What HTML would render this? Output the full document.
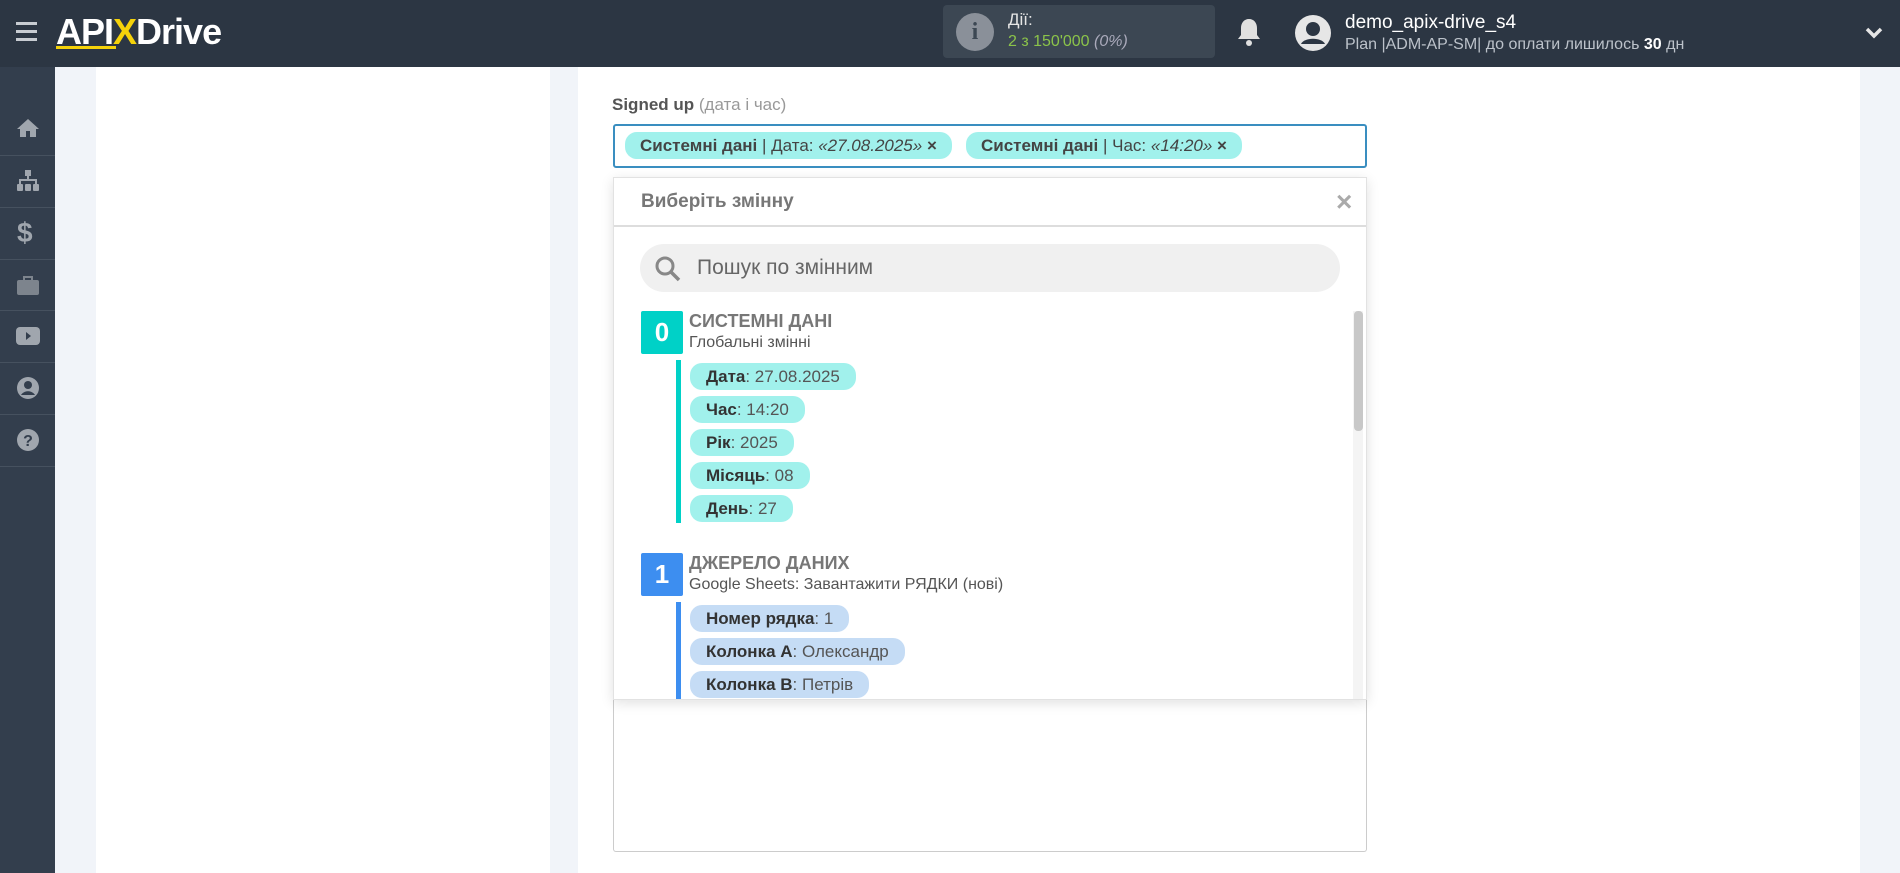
<!DOCTYPE html>
<html><head><meta charset="utf-8"><style>
*{box-sizing:border-box;margin:0;padding:0}
body{width:1900px;height:873px;overflow:hidden;background:#f1f4f9;font-family:"Liberation Sans","Noto Sans CJK SC",sans-serif;position:relative;color:#444}
.hdr{position:absolute;left:0;top:0;width:1900px;height:67px;background:#2c3643}
.side{position:absolute;left:0;top:67px;width:55px;height:806px;background:#333e4d}
.sep{position:absolute;left:0;width:55px;height:1px;background:#46515f}
.ic{position:absolute;left:16px;width:24px;height:24px}
.abs{position:absolute}
.pill{position:absolute;left:690px;height:27px;border-radius:12px;background:#a1f1ec;font-size:17px;line-height:27px;padding:0 16px;color:#555}
.pill b{color:#333}
.pb{background:#c5dcf5}
</style></head><body>
<div class="hdr">
  <div class="abs" style="left:16px;top:22px;width:21px;height:3px;background:#c8ccd2;box-shadow:0 8px 0 #c8ccd2,0 16px 0 #c8ccd2"></div>
  <div class="abs" style="left:56px;top:11px;font-size:36px;font-weight:bold;color:#fff;letter-spacing:-1px">API<span style="color:#f5d20a">X</span>Drive</div>
  <div class="abs" style="left:56px;top:46px;width:60px;height:3px;background:#f5d20a"></div>
  <div class="abs" style="left:943px;top:5px;width:272px;height:53px;background:#3c4753;border-radius:4px"></div>
  <div class="abs" style="left:956px;top:13px;width:38px;height:38px;border-radius:50%;background:#8a9099;color:#3c4753;font-weight:bold;font-size:24px;text-align:center;line-height:38px;font-family:'Liberation Serif',serif">i</div>
  <div class="abs" style="left:1008px;top:10px;font-size:17px;color:#e6e6e6">Дії:</div>
  <div class="abs" style="left:1008px;top:33px;font-size:16px;color:#8bc34a">2 з 150'000 <i style="color:#aab">(0%)</i></div>
  <svg class="abs" style="left:1237px;top:17px" width="24" height="30" viewBox="0 0 24 30"><path d="M12 2c-5 0-8 4-8 9v7l-3 4h22l-3-4v-7c0-5-3-9-8-9z" fill="#e0e0e0"/><circle cx="12" cy="26" r="3" fill="#e0e0e0"/></svg>
  <svg class="abs" style="left:1294px;top:14px" width="38" height="38" viewBox="0 0 38 38"><circle cx="19" cy="19" r="18" fill="#e6e6e6"/><circle cx="19" cy="15" r="7" fill="#2c3643"/><path d="M7 30c3-7 21-7 24 0" fill="#2c3643"/></svg>
  <div class="abs" style="left:1345px;top:12px;font-size:19px;color:#fff">demo_apix-drive_s4</div>
  <div class="abs" style="left:1345px;top:36px;font-size:16px;color:#bcc2ca">Plan |ADM-AP-SM| до оплати лишилось <b style="color:#fff">30</b> дн</div>
  <svg class="abs" style="left:1865px;top:26px" width="18" height="14" viewBox="0 0 18 14"><path d="M2 3l7 7 7-7" stroke="#e6e6e6" stroke-width="3.5" fill="none"/></svg>
</div>
<div class="side">
  <div class="sep" style="top:88px"></div><div class="sep" style="top:140px"></div><div class="sep" style="top:192px"></div><div class="sep" style="top:243px"></div><div class="sep" style="top:295px"></div><div class="sep" style="top:347px"></div><div class="sep" style="top:399px"></div>
  <svg class="ic" style="top:49px" viewBox="0 0 24 24"><path d="M12 3L1 13h3v8h6v-6h4v6h6v-8h3z" fill="#a0a6ae"/></svg>
  <svg class="ic" style="top:102px" viewBox="0 0 24 24"><rect x="9" y="1" width="6" height="6" fill="#a0a6ae"/><path d="M12 7v4M4 15v-4h16v4" stroke="#a0a6ae" stroke-width="2" fill="none"/><rect x="1" y="15" width="6" height="7" rx="1" fill="#a0a6ae"/><rect x="9" y="15" width="6" height="7" rx="1" fill="#a0a6ae"/><rect x="17" y="15" width="6" height="7" rx="1" fill="#a0a6ae"/></svg>
  <div class="abs" style="left:17px;top:150px;font-size:28px;font-weight:bold;color:#a0a6ae">$</div>
  <svg class="ic" style="top:206px" viewBox="0 0 24 24"><rect x="1" y="7" width="22" height="15" rx="2" fill="#7d848d"/><path d="M8 7V4h8v3" stroke="#7d848d" stroke-width="2" fill="none"/></svg>
  <svg class="ic" style="top:257px" viewBox="0 0 24 24"><rect x="0" y="3" width="24" height="18" rx="4" fill="#a0a6ae"/><path d="M10 8l5 4-5 4z" fill="#333e4d"/></svg>
  <svg class="ic" style="top:309px" viewBox="0 0 24 24"><circle cx="12" cy="12" r="11" fill="#a0a6ae"/><circle cx="12" cy="9" r="4" fill="#333e4d"/><path d="M5 19c3-5 11-5 14 0" fill="#333e4d"/></svg>
  <svg class="ic" style="top:361px" viewBox="0 0 24 24"><circle cx="12" cy="12" r="11" fill="#a0a6ae"/><text x="12" y="18" text-anchor="middle" font-size="16" font-weight="bold" fill="#333e4d" font-family="Liberation Sans">?</text></svg>
</div>
<div class="abs" style="left:96px;top:67px;width:454px;height:806px;background:#fff"></div>
<div class="abs" style="left:578px;top:67px;width:1282px;height:806px;background:#fff"></div>
<div class="abs" style="left:612px;top:95px;font-size:17px;font-weight:bold;color:#555">Signed up <span style="font-weight:normal;color:#999">(дата і час)</span></div>
<div class="abs" style="left:613px;top:124px;width:754px;height:44px;border:2px solid #3a8ec0;border-radius:3px"></div>
<div class="abs" style="left:625px;top:132px;height:27px;border-radius:12px;background:#a1f1ec;font-size:17px;line-height:27px;padding:0 15px;color:#444;white-space:nowrap"><b>Системні дані</b> | Дата: <i>«27.08.2025»</i> <b>×</b></div>
<div class="abs" style="left:966px;top:132px;height:27px;border-radius:12px;background:#a1f1ec;font-size:17px;line-height:27px;padding:0 15px;color:#444;white-space:nowrap"><b>Системні дані</b> | Час: <i>«14:20»</i> <b>×</b></div>
<div class="abs" style="left:613px;top:700px;width:754px;height:152px;border:1px solid #ccc;border-top:none;border-radius:0 0 3px 3px"></div>
<div class="abs" style="left:613px;top:177px;width:754px;height:523px;background:#fff;border:1px solid #e2e2e2;box-shadow:0 3px 12px rgba(0,0,0,.12);overflow:hidden">
  <div class="abs" style="left:27px;top:13px;font-size:19px;font-weight:bold;color:#777">Виберіть змінну</div>
  <div class="abs" style="left:722px;top:8px;font-size:28px;font-weight:bold;color:#aaa">×</div>
  <div class="abs" style="left:0;top:47px;width:754px;height:2px;background:#ddd"></div>
  <div class="abs" style="left:26px;top:66px;width:700px;height:48px;border-radius:24px;background:#f0f0f0"></div>
  <svg class="abs" style="left:40px;top:77px" width="28" height="28" viewBox="0 0 28 28"><circle cx="11" cy="11" r="8" stroke="#888" stroke-width="3" fill="none"/><path d="M17 17l8 8" stroke="#888" stroke-width="3.5"/></svg>
  <div class="abs" style="left:83px;top:78px;font-size:21px;color:#666">Пошук по змінним</div>
  <div class="abs" style="left:739px;top:133px;width:10px;height:390px;background:#f4f4f4"></div>
  <div class="abs" style="left:740px;top:133px;width:9px;height:120px;background:#c8c8c8;border-radius:4px"></div>
  <div class="abs" style="left:27px;top:133px;width:42px;height:43px;background:#00d1c7;color:#fff;font-size:26px;font-weight:bold;text-align:center;line-height:43px;border-radius:2px">0</div>
  <div class="abs" style="left:75px;top:133px;font-size:18px;font-weight:bold;color:#777">СИСТЕМНІ ДАНІ</div>
  <div class="abs" style="left:75px;top:156px;font-size:16px;color:#555">Глобальні змінні</div>
  <div class="abs" style="left:62px;top:182px;width:5px;height:163px;background:#00d1c7"></div>
  <div class="abs" style="left:27px;top:375px;width:42px;height:43px;background:#3d8ef0;color:#fff;font-size:26px;font-weight:bold;text-align:center;line-height:43px;border-radius:2px">1</div>
  <div class="abs" style="left:75px;top:375px;font-size:18px;font-weight:bold;color:#777">ДЖЕРЕЛО ДАНИХ</div>
  <div class="abs" style="left:75px;top:398px;font-size:16px;color:#555">Google Sheets: Завантажити РЯДКИ (нові)</div>
  <div class="abs" style="left:62px;top:424px;width:5px;height:110px;background:#3d8ef0"></div>
</div>
<div class="pill" style="top:363px"><b>Дата</b>: 27.08.2025</div>
<div class="pill" style="top:396px"><b>Час</b>: 14:20</div>
<div class="pill" style="top:429px"><b>Рік</b>: 2025</div>
<div class="pill" style="top:462px"><b>Місяць</b>: 08</div>
<div class="pill" style="top:495px"><b>День</b>: 27</div>
<div class="pill pb" style="top:605px"><b>Номер рядка</b>: 1</div>
<div class="pill pb" style="top:638px"><b>Колонка A</b>: Олександр</div>
<div style="position:absolute;left:613px;top:671px;width:754px;height:29px;overflow:hidden"><div class="pill pb" style="left:77px;top:0"><b>Колонка B</b>: Петрів</div></div>
</body></html>
